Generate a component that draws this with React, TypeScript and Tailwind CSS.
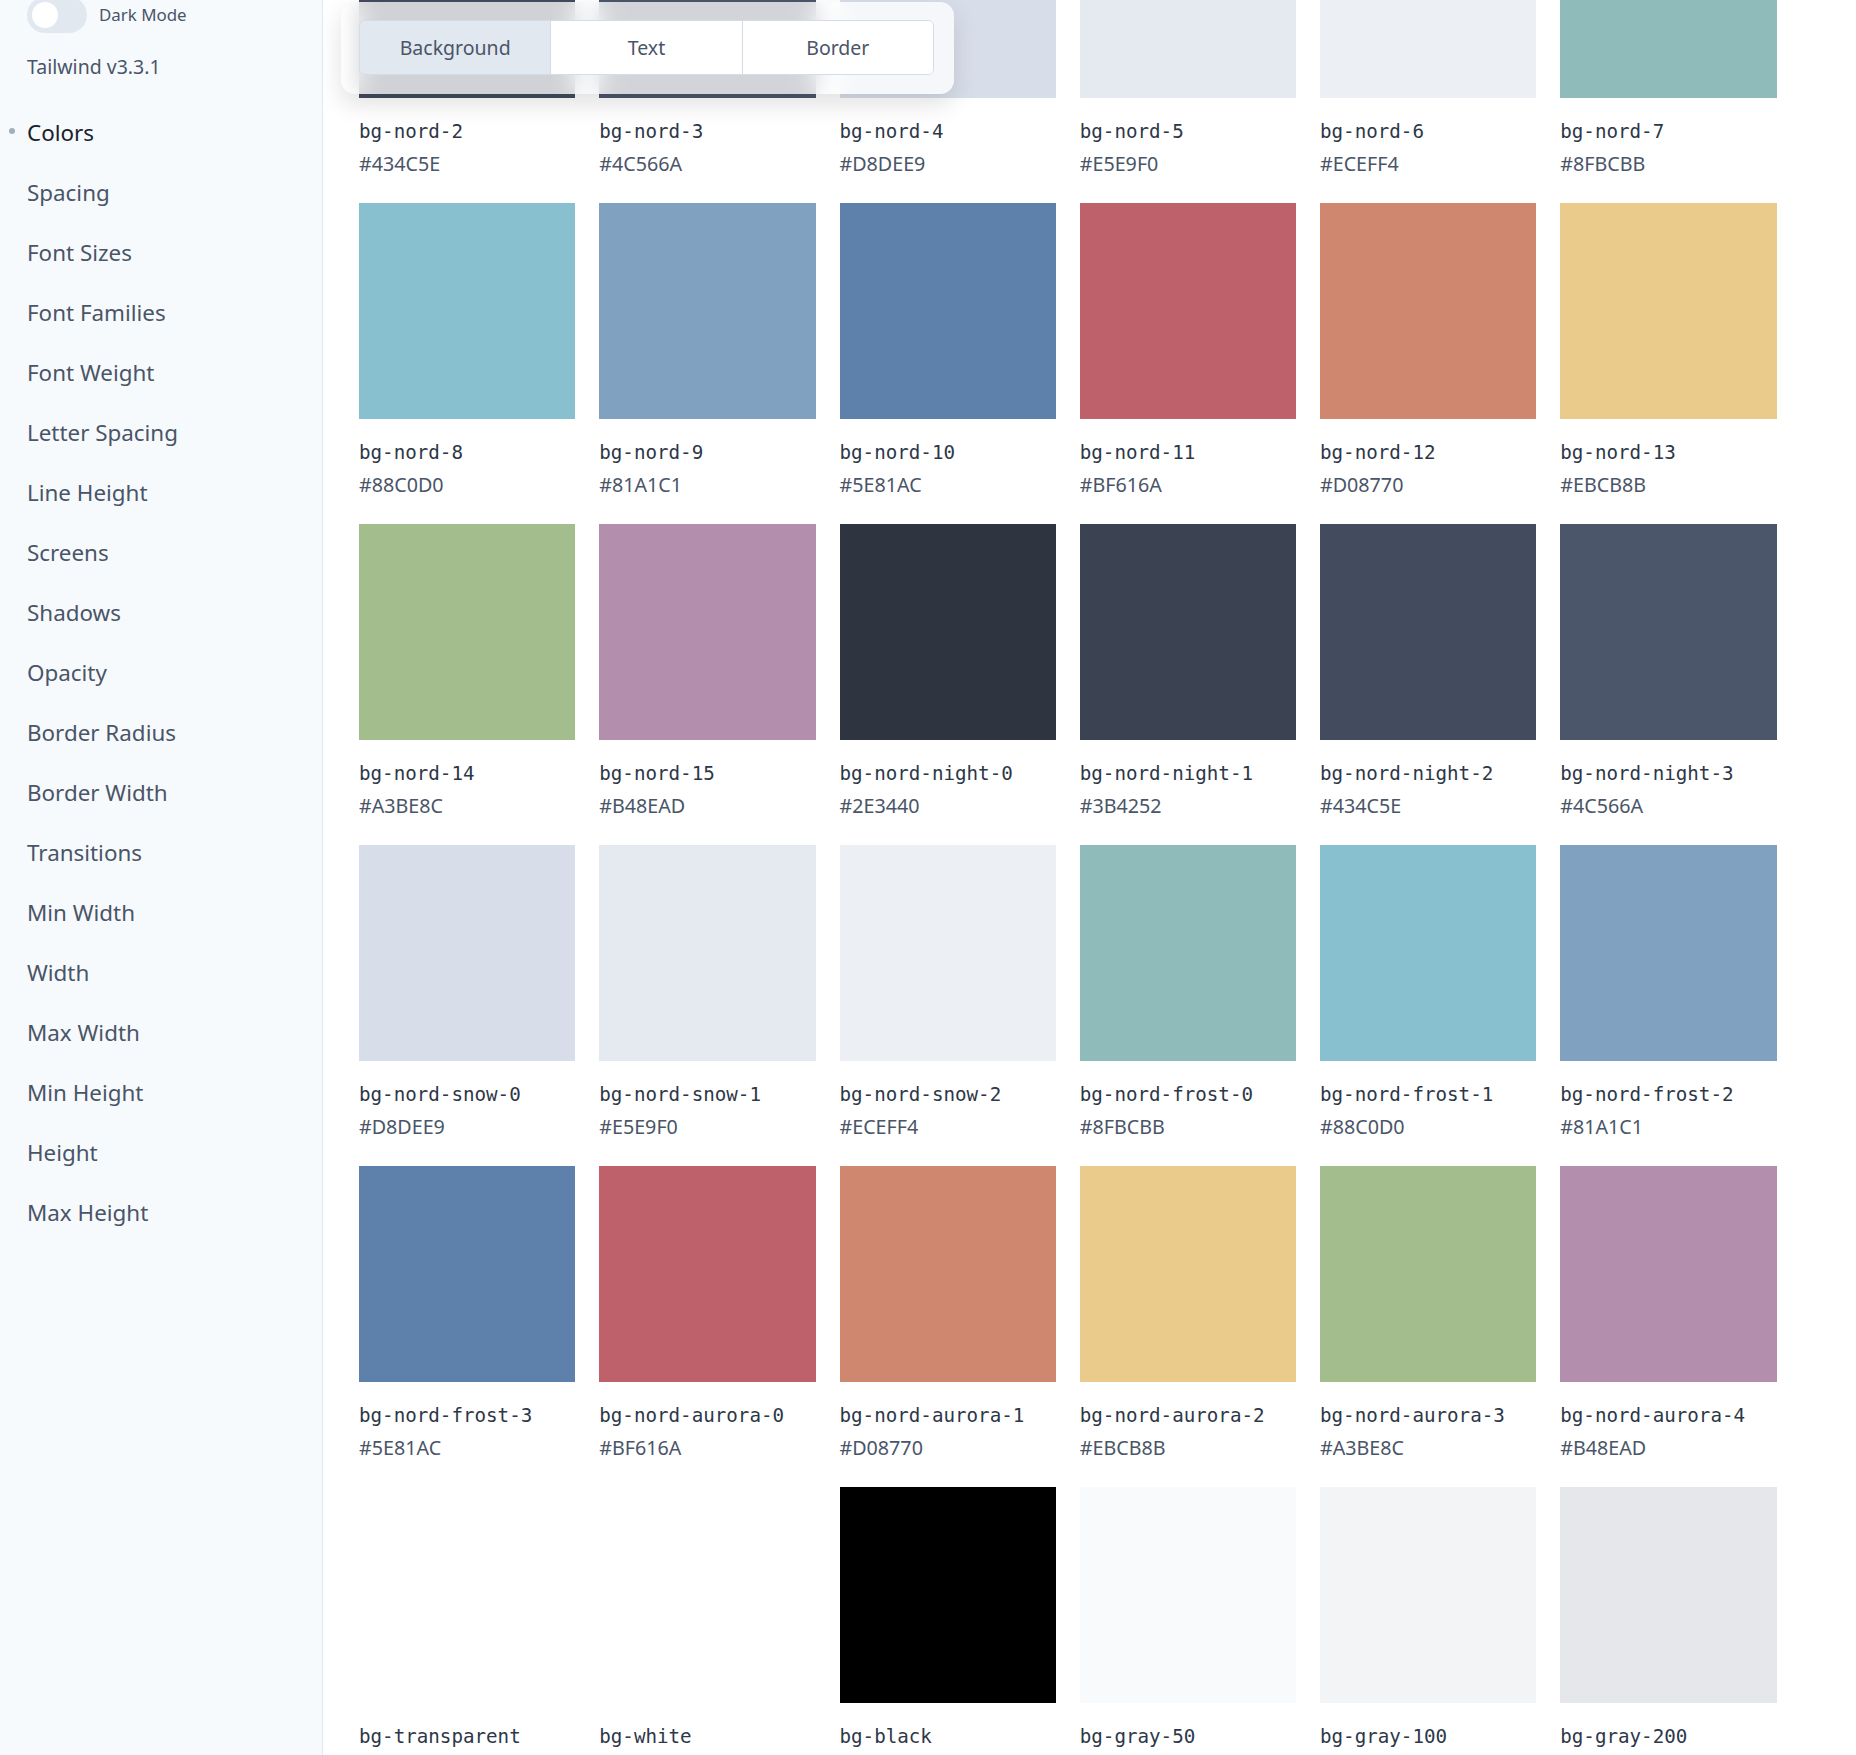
import React from "react";

type Swatch = { name: string; hex: string; cls: string };

const rows: Swatch[][] = [
  [
    { name: "bg-nord-2", hex: "#434C5E", cls: "bg-[#434C5E]" },
    { name: "bg-nord-3", hex: "#4C566A", cls: "bg-[#4C566A]" },
    { name: "bg-nord-4", hex: "#D8DEE9", cls: "bg-[#D8DEE9]" },
    { name: "bg-nord-5", hex: "#E5E9F0", cls: "bg-[#E5E9F0]" },
    { name: "bg-nord-6", hex: "#ECEFF4", cls: "bg-[#ECEFF4]" },
    { name: "bg-nord-7", hex: "#8FBCBB", cls: "bg-[#8FBCBB]" },
  ],
  [
    { name: "bg-nord-8", hex: "#88C0D0", cls: "bg-[#88C0D0]" },
    { name: "bg-nord-9", hex: "#81A1C1", cls: "bg-[#81A1C1]" },
    { name: "bg-nord-10", hex: "#5E81AC", cls: "bg-[#5E81AC]" },
    { name: "bg-nord-11", hex: "#BF616A", cls: "bg-[#BF616A]" },
    { name: "bg-nord-12", hex: "#D08770", cls: "bg-[#D08770]" },
    { name: "bg-nord-13", hex: "#EBCB8B", cls: "bg-[#EBCB8B]" },
  ],
  [
    { name: "bg-nord-14", hex: "#A3BE8C", cls: "bg-[#A3BE8C]" },
    { name: "bg-nord-15", hex: "#B48EAD", cls: "bg-[#B48EAD]" },
    { name: "bg-nord-night-0", hex: "#2E3440", cls: "bg-[#2E3440]" },
    { name: "bg-nord-night-1", hex: "#3B4252", cls: "bg-[#3B4252]" },
    { name: "bg-nord-night-2", hex: "#434C5E", cls: "bg-[#434C5E]" },
    { name: "bg-nord-night-3", hex: "#4C566A", cls: "bg-[#4C566A]" },
  ],
  [
    { name: "bg-nord-snow-0", hex: "#D8DEE9", cls: "bg-[#D8DEE9]" },
    { name: "bg-nord-snow-1", hex: "#E5E9F0", cls: "bg-[#E5E9F0]" },
    { name: "bg-nord-snow-2", hex: "#ECEFF4", cls: "bg-[#ECEFF4]" },
    { name: "bg-nord-frost-0", hex: "#8FBCBB", cls: "bg-[#8FBCBB]" },
    { name: "bg-nord-frost-1", hex: "#88C0D0", cls: "bg-[#88C0D0]" },
    { name: "bg-nord-frost-2", hex: "#81A1C1", cls: "bg-[#81A1C1]" },
  ],
  [
    { name: "bg-nord-frost-3", hex: "#5E81AC", cls: "bg-[#5E81AC]" },
    { name: "bg-nord-aurora-0", hex: "#BF616A", cls: "bg-[#BF616A]" },
    { name: "bg-nord-aurora-1", hex: "#D08770", cls: "bg-[#D08770]" },
    { name: "bg-nord-aurora-2", hex: "#EBCB8B", cls: "bg-[#EBCB8B]" },
    { name: "bg-nord-aurora-3", hex: "#A3BE8C", cls: "bg-[#A3BE8C]" },
    { name: "bg-nord-aurora-4", hex: "#B48EAD", cls: "bg-[#B48EAD]" },
  ],
  [
    { name: "bg-transparent", hex: "transparent", cls: "bg-transparent" },
    { name: "bg-white", hex: "#fff", cls: "bg-white" },
    { name: "bg-black", hex: "#000", cls: "bg-black" },
    { name: "bg-gray-50", hex: "#f9fafb", cls: "bg-[#f9fafb]" },
    { name: "bg-gray-100", hex: "#f3f4f6", cls: "bg-[#f3f4f6]" },
    { name: "bg-gray-200", hex: "#e5e7eb", cls: "bg-[#e5e7eb]" },
  ],
];

const nav = [
  "Colors",
  "Spacing",
  "Font Sizes",
  "Font Families",
  "Font Weight",
  "Letter Spacing",
  "Line Height",
  "Screens",
  "Shadows",
  "Opacity",
  "Border Radius",
  "Border Width",
  "Transitions",
  "Min Width",
  "Width",
  "Max Width",
  "Min Height",
  "Height",
  "Max Height",
];

const sans = "font-['Noto_Sans','Open_Sans',sans-serif]";

export default function App() {
  return (
    <div className={`flex h-[1755px] w-full overflow-hidden bg-white ${sans}`}>
      <aside className="w-[323px] shrink-0 h-full bg-[#f7fafc] border-r border-[#e2e8f0]">
        <div className="-mt-[3px] px-[27px]">
          <div className="flex items-center h-[36px] gap-[12px]">
            <div className="relative w-[60px] h-[36px] rounded-full bg-[#e2e8f0]">
              <div className="absolute left-[5px] top-[5px] w-[26px] h-[26px] rounded-full bg-white" />
            </div>
            <span className="text-[16.9px] text-[#4a5568]">Dark Mode</span>
          </div>
          <div className="mt-[19px] h-[30px] leading-[30px] text-[19.5px] text-[#4a5568]">
            Tailwind v3.3.1
          </div>
          <ul className="mt-[21px]">
            {nav.map((item, i) => (
              <li
                key={item}
                className={`relative h-[60px] leading-[60px] text-[22.4px] ${
                  i === 0 ? "text-[#1a202c]" : "text-[#4a5568]"
                }`}
              >
                {i === 0 && (
                  <span className="absolute left-[-18px] top-[25px] w-[6px] h-[6px] rounded-full bg-[#a0aec0]" />
                )}
                {item}
              </li>
            ))}
          </ul>
        </div>
      </aside>
      <main className="relative flex-1 pl-[36px]">
        <div className="-mt-[118px] grid grid-cols-[repeat(6,216.25px)] gap-x-[24px] gap-y-[27px]">
          {rows.flat().map((s) => (
            <div key={s.name}>
              <div className={`w-full h-[216px] ${s.cls}`} />
              <div className="mt-[22px] h-[24px] leading-[24px] text-[19.2px] text-[#2d3748] font-['DejaVu_Sans_Mono',monospace]">
                {s.name}
              </div>
              <div className="mt-[8px] h-[24px] leading-[24px] text-[19.7px] text-[#4a5568]">
                {s.hex}
              </div>
            </div>
          ))}
        </div>
        <div className="absolute left-[18px] top-[2px] w-[613px] rounded-[14px] bg-white/75 backdrop-blur-md shadow-[0_10px_25px_rgba(0,0,0,0.12)] pl-[18px] pr-[20px] pt-[18px] pb-[19px]">
          <div className="flex h-[55px] rounded-[6px] border border-[#d5dce6] overflow-hidden">
            <button className="flex-1 bg-[#e2e8f0] text-[19.5px] text-[#4a5568]">
              Background
            </button>
            <button className="flex-1 bg-white border-l border-[#d5dce6] text-[19.5px] text-[#4a5568]">
              Text
            </button>
            <button className="flex-1 bg-white border-l border-[#d5dce6] text-[19.5px] text-[#4a5568]">
              Border
            </button>
          </div>
        </div>
      </main>
    </div>
  );
}
